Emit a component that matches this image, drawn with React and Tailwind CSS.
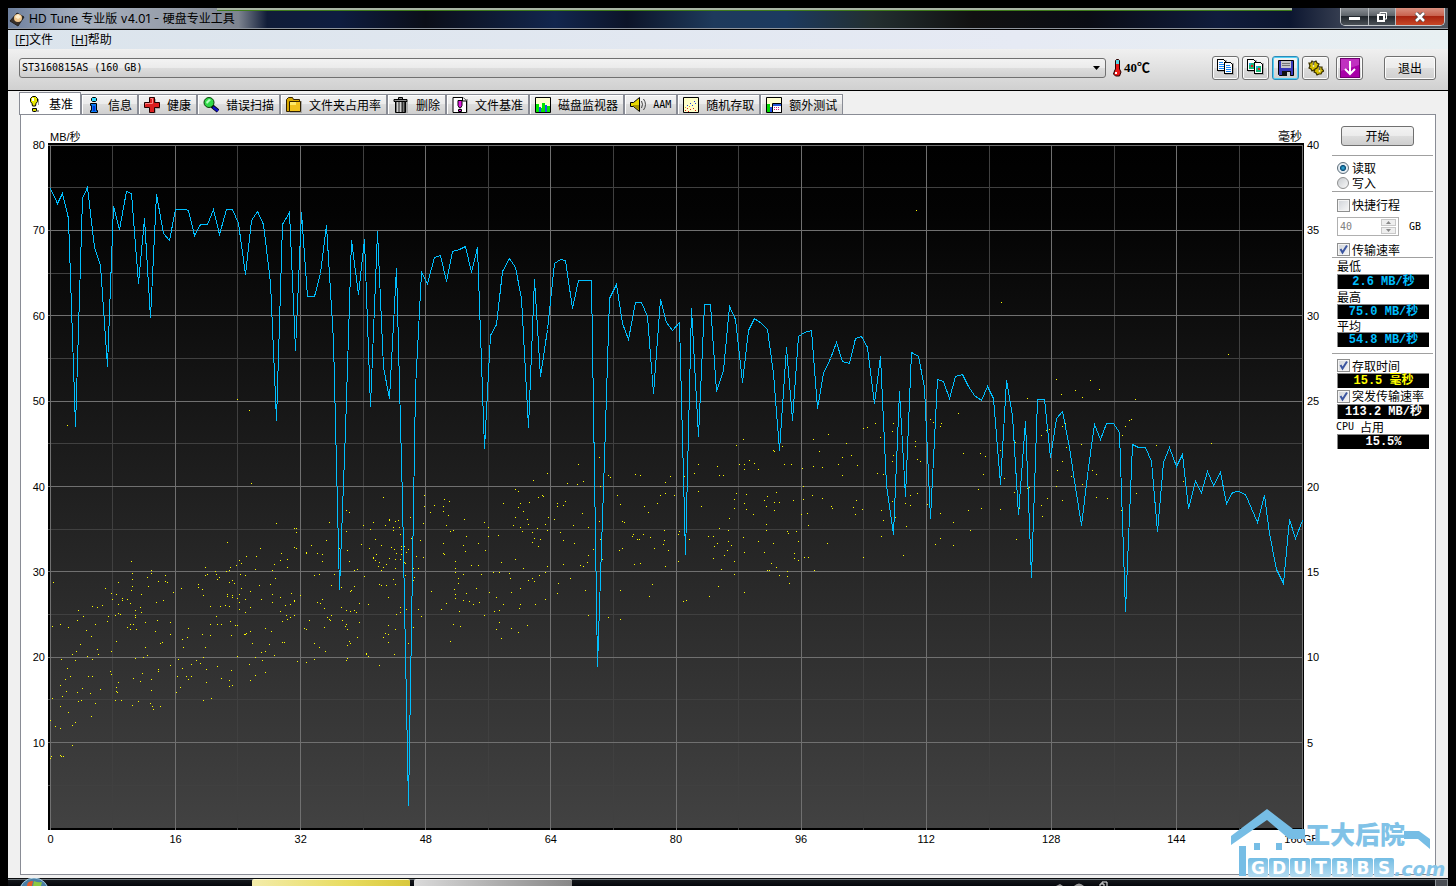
import React from "react";

const transferRate =
  "50,188 57,203 62,193 68,218 75,426 82,198 87,187 94,247 100,265 107,366 113,206 119,229 126,191 131,193 138,283 144,218 150,317 156,194 163,233 169,240 175,209 185,209 188,210 194,235 200,224 207,224 213,209 219,234 226,209 232,209 238,223 245,274 251,220 257,211 263,224 270,282 276,420 282,224 289,212 295,350 301,212 307,296 314,296 320,273 326,225 333,340 339,589 345,430 351,240 358,294 364,239 370,406 377,231 383,367 389,398 396,268 402,500 408,805 415,388 421,272 427,283 434,257 440,255 446,281 452,251 459,249 465,246 471,272 477,247 484,448 490,335 496,324 502,271 509,258 515,267 521,298 528,427 534,279 540,376 547,329 554,263 560,259 565,260 572,308 578,280 591,280 597,666 604,458 609,298 616,284 622,323 628,339 635,302 641,302 647,316 653,393 660,299 666,322 672,330 679,322 685,554 691,308 698,436 704,304 710,304 716,391 723,370 729,306 735,319 742,382 748,330 754,318 761,323 767,329 773,373 779,450 786,347 792,420 798,336 804,332 811,330 817,408 823,373 830,358 836,342 842,361 849,363 855,338 861,336 867,347 874,403 880,356 886,485 893,534 899,391 905,496 911,352 918,356 924,387 930,518 937,379 943,381 949,398 955,376 962,374 968,386 974,395 981,400 987,386 993,398 1000,484 1006,380 1012,415 1018,514 1025,421 1031,577 1037,399 1044,399 1050,457 1056,418 1062,411 1069,447 1075,487 1081,525 1088,467 1094,424 1100,439 1106,423 1113,423 1119,432 1125,611 1132,444 1138,447 1145,447 1151,461 1157,531 1163,462 1169,447 1176,466 1182,454 1188,508 1195,481 1201,492 1207,471 1213,485 1220,472 1226,503 1232,492 1238,491 1245,494 1251,508 1257,522 1264,495 1269,533 1276,569 1283,583 1289,519 1295,538 1302,520";

// Access time samples, in groups, each in thirds of a unit from its origin.
const accessTime = [
  {
    x: 20,
    y: 460,
    points:
      "694,70 769,190 622,247 721,265 679,289 709,289 658,301 664,310 649,316 556,322 706,328 631,322 619,334 628,331 586,334 589,343 562,343 556,346 661,343 676,346 592,358 598,352 637,361 643,370 628,367 535,373 535,382 547,388 550,406 484,385 460,397 442,367 436,364 415,364 436,346 394,331 394,340 382,352 385,379 364,403 334,304 337,340 337,358 337,379 334,391 295,367 256,385 274,400 289,403 277,418 307,415 307,421 322,418 331,430 295,433 247,436 232,442 217,439 175,451 190,469 172,481 121,493 97,499 100,367 145,502 199,511 214,529 226,493 262,484 265,469 286,466 295,460 301,463 346,451 361,442 364,457 346,466 346,472 331,493 340,493 322,502 331,508 349,508 376,487 412,481 406,514 451,487 451,523 409,427 430,421 289,544 274,574 232,568 235,583 202,589 217,598 181,553 169,574 157,583 166,601 124,598 142,625 136,658 121,676 139,694 151,649 127,709 97,715 205,649 217,649 187,685 172,697 211,700 241,688 184,721 175,724 226,730 121,739 145,757 214,769 106,799 121,805 157,796 166,787 91,781 157,856 94,889 91,895 121,886 124,889 130,889 271,634 274,643 295,667 289,682 289,694 292,697 286,721 304,721 337,736 355,724 391,730 397,739 400,748 421,739 394,691 361,664 340,655 367,640 394,658 415,628 415,634 346,595 370,592 382,586 376,562 421,550 427,547 451,616 475,598 472,649 469,697 481,682 505,658 499,649 514,649 514,613 487,625 529,601 541,610 550,592 556,562 490,562 487,538 502,532 505,505 547,523 571,526 571,493 571,439 589,469 592,493 604,493 601,439 616,436 628,439 631,484 646,496 652,496 634,526 622,403 622,409 637,406 637,412 652,415 658,403 664,385 658,427 676,418 658,448 676,457 691,442 691,394 724,418 718,376 751,373 757,403 757,427 757,331 763,313 766,355 781,301 784,280 802,298 802,322 823,205 829,205 829,217 823,262 829,265 781,412 781,454 796,436 811,433 814,400 823,421 823,424 841,406 799,466 802,478 811,472 823,466 787,484 736,505 754,514 691,514 673,523 676,523 679,520 697,550 724,577 736,574 748,553 763,586 787,547 793,547 706,592 727,601 688,613 736,637 706,646 691,661 634,631 628,661 637,676 628,679 604,655 592,619 559,628 559,667 550,721 574,715 652,589 832,604 859,607 883,598 916,574 898,562 883,550 859,508 853,505 868,481 913,502 928,478 931,481 934,466 922,472 913,445 892,427 901,430 907,418 934,376 943,343 898,343 883,346 907,304 907,283 892,280 874,256 859,277 859,280 919,241 928,187 979,151 988,157 979,214 958,265 982,271 988,304 1003,331 1012,328 1033,349 1003,379 994,391 991,394 964,382 964,442 979,451 991,454 1003,451 1009,457 1018,430 1045,433 967,481 979,493 976,499 982,508 1018,487 1012,532 988,544 991,550 982,556 979,601 982,595 1039,580 1039,583 1045,589 1078,616 1123,583 1105,547 1090,532 1096,520 1105,523 1105,496 1126,508 1129,463 1141,442 1141,457 1105,412 1126,373 1120,358 1099,376 1084,376 1078,373 1084,331 1090,322 1075,319 1078,307 1066,301 1060,292 1060,295 1069,283 1084,256 1048,265 1066,238 1024,253 1051,208 1030,196 1060,187 1096,196 1108,178 1108,181 1126,184 1135,181 1120,202 1120,211 1138,202 1141,223 1171,172 1090,112 1174,235 1144,259 1153,259 1144,268 1123,268 1114,262 1129,280 1144,283 1126,298 1141,298 1108,295 1099,313 1126,325 1159,277 1165,268 1156,310 1156,346 1153,307 1180,325 1195,325 1183,352 1180,361 1189,289 1210,292 1201,241 1210,190 1213,139 1213,106 1231,157 1243,136 1234,394 1204,469 1195,448 1159,448 1180,502 1165,550",
  },
  {
    x: 420,
    y: 440,
    points:
      "13,166 13,199 31,217 43,196 70,199 73,178 88,184 70,214 85,226 79,256 91,274 100,271 10,250 1,301 10,352 133,238 193,247 205,262 205,289 139,289 130,316 136,334 175,310 196,331 235,286 250,190 286,148 295,154 340,121 382,100 367,166 370,169 355,172 328,187 301,190 295,202 310,214 286,232 280,256 301,262 307,274 322,238 325,253 352,265 337,277 343,295 337,307 361,298 355,319 376,253 385,232 382,271 403,238 412,190 412,199 430,196 436,184 442,130 472,133 490,124 475,73 487,220 460,256 505,262 421,277 430,301 463,310 520,328 505,346 502,367 490,379 481,376 430,373 451,415 415,430 412,460 496,451 505,526 70,310 70,340 73,343 106,364 106,385 106,397 130,403 115,415 115,430 154,376 175,376 184,403 169,445 139,460 103,448 106,463 106,475 130,481 148,484 160,493 178,487 79,490 64,508 34,454 4,529 118,514 100,553 121,559 91,604 193,526 208,457 229,472 250,493 223,514 238,511 238,547 229,568 244,595 274,565 295,577 322,556 298,505 301,493 346,493 376,478 274,457 301,445 325,421 343,424 337,415 358,406 376,397 382,379 310,385 286,358 268,400 271,415 244,367 220,397 238,397 538,52 541,139 565,106 571,112 592,166 601,193 607,244 613,247 538,244 541,298 547,358 598,331 607,325 640,283 637,289 652,298 658,298 670,283 691,292 703,325 733,271 733,301 730,313 745,331 736,379 643,373 661,370 697,433 688,469 601,451 565,532 601,538 646,103 661,106 673,199 685,217 712,190 721,166 736,160 763,166 736,127 751,109 790,70 802,52 793,109 835,73 823,100 793,214 778,274 775,283 775,364 808,298 835,154 844,199 892,79 898,106 910,106 949,16 958,73 973,73 973,88 988,61 1003,70 1015,88 1060,31 1063,34 1087,19 1093,73 1114,73 1147,85 1180,79 1198,34 1207,82 1255,73 949,160 943,178 943,205 928,235 898,265 925,271 925,304 934,316 922,331 913,346 943,364 943,403 904,388 880,355 883,319 892,310 865,289 880,289 895,439 868,469 973,457 799,481 790,484 979,163 973,190 979,208 1000,223 1033,181 1042,169 1069,157 1063,187 1078,187 1039,199 1063,211 1039,253 1039,271 1060,310 1015,304 970,292 973,337 1033,337 1054,370 1069,382 1042,391 1048,391 1078,406 1102,409 1102,394 1108,430 1120,181 1150,178 1150,139 1177,166 1207,175 1234,199 1237,205 1162,220 1144,223 1165,256 1102,274 1105,280 1129,274 1135,304 1123,340 1123,355 1135,361 1153,352 1165,352 1183,391 1222,310 970,-2 1180,-2 1225,-17",
  },
  {
    x: 840,
    y: 300,
    points:
      "484,8 1165,163 649,238 751,241 778,268 706,271 664,283 727,292 886,298 562,295 355,340 271,358 280,367 304,370 301,379 160,370 106,370 82,382 70,385 157,394 121,412 226,424 226,439 19,430 34,466 7,472 7,526 52,496 112,520 130,523 160,466 157,484 232,478 241,484 370,460 421,460 436,469 430,523 415,568 469,412 481,451 517,349 526,427 493,535 523,577 538,625 562,565 568,562 583,547 604,406 619,391 628,388 676,370 667,379 679,442 724,433 634,454 667,484 652,511 694,529 757,511 769,523 727,553 649,559 622,595 604,616 607,649 667,601 769,592 802,595 844,631 889,580 856,379 868,361 874,358 847,406 949,436 1114,430 1030,544 49,601 40,622 46,643 67,628 124,631 130,661 157,604 166,652 196,610 211,586 211,616 232,580 199,679 124,709 190,766 70,772 262,613 274,595 301,640 340,667 385,631 424,625 481,628 391,691 301,715 286,733 340,736 529,718 229,-270",
  },
  { x: 20, y: 120, points: "142,916 652,838 688,871" },
];

const dotPath = accessTime
  .flatMap((g) =>
    g.points.split(" ").map((p) => {
      const [x, y] = p.split(",").map(Number);
      return `M${Math.round(g.x + (x - 1) / 3)} ${Math.round(g.y + (y - 1) / 3) + 0.5}h1`;
    })
  )
  .join("");

const majorX = [50, 175, 300, 425, 550, 676, 801, 926, 1051, 1176, 1302];
const minorX = [112, 237, 363, 488, 613, 738, 863, 989, 1114, 1239];
const majorY = [145, 230, 315, 401, 486, 571, 657, 742];
const minorY = [187, 273, 358, 443, 529, 614, 699, 785];
const lines = (xs, ys) =>
  xs.map((x) => `M${x + 0.5} 145V830`).join("") + ys.map((y) => `M48 ${y + 0.5}H1303`).join("");

function Plot() {
  return (
    <svg
      className="block h-full w-full"
      viewBox="48 143 1256 687"
      preserveAspectRatio="none"
      shapeRendering="crispEdges"
      role="img"
      aria-label="传输速率"
    >
      <defs>
        <linearGradient id="plotFill" x1="0" y1="0" x2="0" y2="1">
          <stop offset="0" stopColor="#000" />
          <stop offset="0.1" stopColor="#030303" />
          <stop offset="1" stopColor="#424242" />
        </linearGradient>
      </defs>
      <rect x="48" y="143" width="1256" height="687" fill="#000" />
      <rect x="50" y="145" width="1253" height="683" fill="url(#plotFill)" />
      <path d={lines(minorX, minorY)} stroke="#404040" fill="none" />
      <path d={lines(majorX, majorY)} stroke="#707070" fill="none" />
      <path d={dotPath} stroke="#ffff00" fill="none" />
      <polyline points={transferRate} transform="translate(0.5 0.5)" stroke="#00bfff" fill="none" />
    </svg>
  );
}

const Svg = ({ children, size = 16, className = "h-4 w-4" }) => (
  <svg viewBox={`0 0 ${size} ${size}`} className={`${className} shrink-0`} aria-hidden="true">
    {children}
  </svg>
);

const BulbIcon = () => (
  <Svg>
    <path d="M6 14h7v2H6zM12 3h1v6h-1z" fill="#999" />
    <path d="M4.500 2.500l2-2h3l2 2v3l-1.500 2-.5 2.500h-3l-.5-2.500-1.500-2z" fill="#e6e600" stroke="#000" />
    <path d="M6.500 12.500h4v2l-1 1h-2l-1-1z" fill="#d8d800" stroke="#000" />
    <path d="M6 2h2v3H6z" fill="#fff" />
  </Svg>
);
const InfoIcon = () => (
  <svg viewBox="1 0 14 16" className="h-4 w-[14px] shrink-0" aria-hidden="true">
    <path d="M5.500 1.500l1-1h3l1 1v2l-1 1h-3l-1-1z" fill="#3df" stroke="#000" />
    <path d="M4.500 6.500h6v7h1v2h-7v-2h1v-5h-1z" fill="#0878f0" stroke="#000" />
    <path d="M7 9h2v5H7z" fill="#0035d8" />
  </svg>
);
const CrossIcon = () => (
  <Svg>
    <path d="M6 2h6v4h4v6h-4v4H6z" fill="#aaa" />
    <path d="M5.500.5h5v5h5v5h-5v5h-5v-5h-5v-5h5z" fill="#dc2020" stroke="#200" />
    <path d="M6.500 1.500h2v5h-7v1" stroke="#f88" fill="none" />
  </Svg>
);
const SearchIcon = () => (
  <Svg>
    <path d="M9 9l6 5" stroke="#000" strokeWidth="4" />
    <path d="M10 10l5 4" stroke="#1010c8" strokeWidth="2.500" />
    <circle cx="6" cy="5.500" r="5" fill="#30d848" stroke="#064006" />
    <path d="M3 5l3-3 2 1-4 4z" fill="#b8ffc0" />
  </Svg>
);
const FolderIcon = () => (
  <Svg>
    <path d="M2 4h14v12H4z" fill="#aaa" />
    <path d="M.5 14.500v-12l2-2h4l1 2h6v12z" fill="#d8a800" stroke="#302000" />
    <path d="M3.500 4.500h11v10h-11z" fill="#f1c21d" stroke="#302000" />
    <path d="M4 5h6v3H4z" fill="#ffea68" />
  </Svg>
);
const BinIcon = () => (
  <Svg>
    <path d="M4 4h11v12H4z" fill="#aaa" />
    <path d="M5.500 2V.5h4V2M1 2.500h13v2H1z" fill="#909090" stroke="#000" />
    <path d="M2.500 4.500h10v11h-10z" fill="#777" stroke="#000" />
    <path d="M4.500 5v10M7.500 5v10" stroke="#d0d0d0" />
    <path d="M9.500 5v10M11.500 5v10" stroke="#333" />
  </Svg>
);
const FileIcon = () => (
  <Svg>
    <path d="M3 2h13v14H3z" fill="#aaa" />
    <path d="M1 .5h10l3.500 3.500v11.500H1z" fill="#fff" stroke="#000" />
    <path d="M10.500.5V4h4" fill="#fff" stroke="#000" />
    <path d="M6 3.500h4v5L8.500 11h-1L6 8.500z" fill="#e018e0" stroke="#000" />
    <path d="M6.500 12.500h3v2h-3z" fill="#e018e0" stroke="#000" />
  </Svg>
);
const MonitorIcon = () => (
  <Svg>
    <path d="M.5.500h15v15H.5z" fill="#ffffd0" stroke="#000" />
    <path d="M1 7h3v8H1zM7 6h3v9H7zM12 9h3v6h-3z" fill="#00e800" />
    <path d="M4 10h2v5H4zM10 8h2v7h-2z" fill="#2050e8" />
    <path d="M6 11h2v4H6z" fill="#00e800" />
  </Svg>
);
const SpeakerIcon = () => (
  <Svg>
    <path d="M.5 5.500h3l6-5v14l-6-5h-3z" fill="#e8d800" stroke="#000" />
    <path d="M3 8h6v5L4 9H3z" fill="#a89400" />
    <path d="M11.500 4q2 3.500 0 7M13.500 2q4 5.500 0 11" fill="none" stroke="#444" />
  </Svg>
);
const ScatterIcon = () => (
  <Svg>
    <path d="M.5.500h15v15H.5z" fill="#ffffc8" stroke="#000" />
    <path d="M2 13h1v1H2zM4 11h1v1H4zM7 12h1v1H7zM10 11h1v1h-1zM12 13h1v1h-1zM5 14h1v1H5z" fill="#e02020" />
    <path d="M4 8h1v1H4zM7 6h1v1H7zM9 8h1v1H9zM11 4h1v1h-1zM12 6h1v1h-1z" fill="#2040e0" />
    <path d="M2 10h1v1H2zM6 9h1v1H6z" fill="#d8a020" />
  </Svg>
);
const ExtraIcon = () => (
  <Svg>
    <path d="M.5.500h15v15H.5z" fill="#ffffd0" stroke="#000" />
    <path d="M1 7h3v8H1z" fill="#00d800" />
    <path d="M4 10h3v5H4z" fill="#2050e8" />
    <path d="M6.500 6.500h9v9h-9z" fill="#fff" stroke="#000" />
    <path d="M7 7h8v2H7z" fill="#2858d8" />
    <path d="M8 10h1v1H8zM10 10h1v1h-1zM12 10h1v1h-1zM8 12h1v1H8zM10 12h1v1h-1zM12 12h1v1h-1z" fill="#d02080" />
  </Svg>
);

const tabs = [
  ["信息", InfoIcon],
  ["健康", CrossIcon],
  ["错误扫描", SearchIcon],
  ["文件夹占用率", FolderIcon],
  ["删除", BinIcon],
  ["文件基准", FileIcon],
  ["磁盘监视器", MonitorIcon],
  ["AAM", SpeakerIcon],
  ["随机存取", ScatterIcon],
  ["额外测试", ExtraIcon],
];

// A dog-eared sheet of paper with its shadow.
const sheet = (x, y) => (
  <g key={x}>
    <path d={`M${x + 1} ${y + 1}h9v12h-9z`} fill="#aaa" />
    <path d={`M${x + 0.5} ${y + 0.5}h6l2 2v9h-8z`} fill="#fff" stroke="#000" />
  </g>
);
const CopyTextIcon = () => (
  <svg viewBox="0 0 17 17" className="h-[17px] w-[17px] shrink-0" shapeRendering="crispEdges" aria-hidden="true">
    {sheet(0, 0)}
    <path d="M2 3.500h4M2 5.500h5M2 7.500h5M2 9.500h5" stroke="#1888f8" />
    {sheet(7, 3)}
    <path d="M9 6.500h4M9 8.500h5M9 10.500h5M9 12.500h5" stroke="#1888f8" />
  </svg>
);
const CopyImageIcon = () => (
  <svg viewBox="0 0 17 17" className="h-[17px] w-[17px] shrink-0" shapeRendering="crispEdges" aria-hidden="true">
    {sheet(0, 0)}
    <path d="M2 4h5v6H2z" fill="#18b878" />
    <path d="M2 4h2v2H2z" fill="#28a8e8" />
    <path d="M4 6h2v2H4z" fill="#e82020" />
    {sheet(7, 3)}
    <path d="M9 7h5v6H9z" fill="#18b878" />
    <path d="M9 7h2v2H9z" fill="#28a8e8" />
    <path d="M11 9h2v2h-2z" fill="#e82020" />
  </svg>
);
const DiskIcon = () => (
  <Svg>
    <path d="M.5.500h15v15h-14l-1-1z" fill="#3838b8" stroke="#000" />
    <path d="M3 1h10v7H3z" fill="#c8c8c8" />
    <path d="M4 3.500h8M4 5.500h8" stroke="#777" />
    <path d="M4 11h9v5H4z" fill="#111" />
    <path d="M9 12h3v4H9z" fill="#d0d0d0" />
  </Svg>
);
const GearsIcon = () => (
  <Svg>
    <g fill="#d8c000" stroke="#3a3000" strokeWidth="1.200">
      <path d="M1 3l2 0 1-2 2 1 2-1 1 2 2 1-1 2 1 2-2 1-1 2-2-1-2 1-1-2-2-1 1-2z" />
      <path d="M7 9l2-1 1-2 2 1 2 0 0 2 2 2-2 1-1 2-2 0-2 1-1-2-2-1z" />
    </g>
    <path d="M5.500 1v6M11.500 6v6" stroke="#666" strokeWidth="1.500" />
    <circle cx="5.500" cy="6" r="1" fill="#fff8b0" />
    <circle cx="11.500" cy="11" r="1" fill="#fff8b0" />
  </Svg>
);
const DownIcon = () => (
  <Svg size={20} className="h-5 w-5">
    <rect x=".5" y=".5" width="19" height="19" fill="#a800a8" stroke="#700070" />
    <path d="M1 1h18v6L1 13z" fill="#d050d0" opacity=".6" />
    <path d="M10 3v13M5 11l5 5 5-5" stroke="#fff" strokeWidth="2" fill="none" />
  </Svg>
);

const fill = "rounded-[3px] border bg-[linear-gradient(#f3f3f3,#ebebeb_49%,#dddddd_50%,#cfcfcf)]";
const face = `${fill} border-[#707070]`;

function ToolButton({ label, active, children }) {
  return (
    <button
      aria-label={label}
      className={`flex h-6 w-[27px] items-center justify-center ${fill} ${
        active
          ? "border-[#2c8ab8] shadow-[inset_0_0_0_1px_#52d0f5]"
          : "border-[#707070] shadow-[inset_0_0_0_1px_#fcfcfc]"
      }`}
    >
      {children}
    </button>
  );
}

function Check({ label, checked, row }) {
  return (
    <label className={`flex items-center gap-[2px] pl-[5px] ${row}`}>
      <span className="grid h-[13px] w-[13px] shrink-0">
        <input
          type="checkbox"
          defaultChecked={checked}
          className="peer col-start-1 row-start-1 h-[13px] w-[13px] appearance-none border border-[#8e8f8f] bg-[linear-gradient(135deg,#cfd3d8,#f8f8f8)] shadow-[inset_0_0_0_1px_#f4f4f4]"
        />
        <svg
          viewBox="0 0 13 13"
          className="pointer-events-none invisible col-start-1 row-start-1 h-[13px] w-[13px] peer-checked:visible"
          aria-hidden="true"
        >
          <path d="M3.500 6l2 3.500L10 2.500" fill="none" stroke="#3b55a0" strokeWidth="2" />
        </svg>
      </span>
      {label}
    </label>
  );
}

function Radio({ label, checked }) {
  return (
    <label className="flex h-[15px] items-center gap-[3px] pl-[5px]">
      <input
        type="radio"
        name="mode"
        defaultChecked={checked}
        className="h-3 w-3 appearance-none rounded-full border border-[#8e8f8f] bg-[linear-gradient(135deg,#c8ccd0,#f8f8f8)] checked:border-[#5d6c78] checked:bg-[radial-gradient(circle,#35b8e8_0,#0b4a74_38%,#e4ecf2_48%)]"
      />
      {label}
    </label>
  );
}

function Value({ children, color }) {
  return (
    <output
      className={`ml-[5px] flex h-[15px] w-[92px] items-center justify-center border-t border-l border-[#888] bg-black font-['Liberation_Mono','Noto_Sans_CJK_SC',monospace] text-[12px] leading-none font-bold whitespace-pre ${color}`}
    >
      {children}
    </output>
  );
}

const Rule = ({ className = "" }) => <div className={`h-px w-full bg-[#a0a0a0] ${className}`} />;

function Sidebar() {
  return (
    <aside className="mr-[2px] flex w-[101px] shrink-0 flex-col pt-[11px] leading-none">
      <button className={`ml-[9px] h-5 w-[73px] ${face}`}>开始</button>
      <Rule className="mt-[9px] mb-1" />
      <Radio label="读取" checked />
      <Radio label="写入" />
      <Rule className="mt-px" />
      <Check label="快捷行程" row="mt-[5px] h-4" />
      <div className="mt-1 flex h-[19px] items-center justify-between pr-3 pl-[5px] font-['DejaVu_Sans_Mono',monospace] text-[10px]">
        <div className="flex h-[19px] w-[62px] items-center border border-[#b0b0b0] px-[2px]">
          <input
            aria-label="快捷行程 GB"
            type="text"
            inputMode="numeric"
            defaultValue="40"
            disabled
            className="w-full min-w-0 text-[#808080]"
          />
          <div className="flex w-[15px] shrink-0 flex-col gap-px">
            <button disabled aria-label="增加" className="flex h-[7px] items-center justify-center border border-[#c8c8c8] bg-[#eee]">
              <svg viewBox="0 0 5 3" className="h-[3px] w-[5px]"><path d="M0 3L2.500 0 5 3z" fill="#888" /></svg>
            </button>
            <button disabled aria-label="减少" className="flex h-[7px] items-center justify-center border border-[#c8c8c8] bg-[#eee]">
              <svg viewBox="0 0 5 3" className="h-[3px] w-[5px]"><path d="M0 0h5L2.500 3z" fill="#888" /></svg>
            </button>
          </div>
        </div>
        <span>GB</span>
      </div>
      <Check label="传输速率" checked row="mt-[6px] h-[15px]" />
      <Rule />
      <div className="flex h-4 items-center pl-[5px]">最低</div>
      <Value color="text-[#00bfff]">2.6 MB/秒</Value>
      <div className="flex h-[15px] items-center pl-[5px]">最高</div>
      <Value color="text-[#00bfff]">75.0 MB/秒</Value>
      <div className="flex h-[13px] items-center pl-[5px]">平均</div>
      <Value color="text-[#00bfff]">54.8 MB/秒</Value>
      <Rule className="mt-[6px]" />
      <Check label="存取时间" checked row="mt-1 h-[15px]" />
      <Value color="text-[#ffff00]">15.5 毫秒</Value>
      <Check label="突发传输速率" checked row="h-4 whitespace-nowrap" />
      <Value color="text-white">113.2 MB/秒</Value>
      <div className="flex h-[15px] items-center gap-[6px] pl-1">
        <span className="font-['DejaVu_Sans_Mono',monospace] text-[10px]">CPU</span>占用
      </div>
      <Value color="text-white">15.5%</Value>
    </aside>
  );
}

function AxisY({ values, side }) {
  return (
    <div
      className={`flex shrink-0 flex-col py-[2px] ${side === "left" ? "w-[27px] items-end pr-[3px]" : "w-7 items-start pl-[3px]"}`}
    >
      {values.map((v) => (
        <div key={v} className="flex-1">
          <span className="flex h-px items-center">{v}</span>
        </div>
      ))}
    </div>
  );
}

function Chart() {
  const ticks = [0, 16, 32, 48, 64, 80, 96, 112, 128, 144];
  return (
    <section className="flex min-w-0 flex-1 flex-col font-['Liberation_Sans','Noto_Sans_CJK_SC',sans-serif] text-[11px] leading-none">
      <div className="flex h-7 shrink-0 items-end justify-between pr-[30px] pl-[29px]">
        <span>MB/秒</span>
        <span className="text-[12px]">毫秒</span>
      </div>
      <div className="flex min-h-0 flex-1">
        <AxisY side="left" values={[80, 70, 60, 50, 40, 30, 20, 10]} />
        <div className="min-w-0 flex-1">
          <Plot />
        </div>
        <AxisY side="right" values={[40, 35, 30, 25, 20, 15, 10, 5]} />
      </div>
      <div className="flex h-11 shrink-0 pt-1 pr-[30px] pl-[29px]">
        {ticks.map((t) => (
          <div key={t} className="flex-1">
            <span className="flex w-px justify-center">{t}</span>
          </div>
        ))}
        <span className="flex w-px justify-center">160GB</span>
      </div>
    </section>
  );
}

function TitleBar() {
  return (
    <header className="flex h-[22px] shrink-0 items-center border-b border-black bg-[linear-gradient(90deg,#6d7f9d_0,#a9b2c0_5%,#949ba7_12%,#7d8490_16%,#101c38_18%,#0e1c40_23%,#0b0e18_29%,#12264e_38%,#0c1428_43%,#1e3a5c_49%,#1c3a60_54%,#232f30_60%,#111_67%,#0a0c14_75%,#101c3c_84%,#0c1630_89%,#3a4254_93%,#50565e_100%)] shadow-[inset_0_-1px_0_#8e949c]">
      <div className="flex items-center gap-1 pl-[1px]">
        <Svg className="h-4 w-4">
          <path d="M1 10l7-8 7 4-6 9z" fill="#3a3028" stroke="#222" />
          <circle cx="9" cy="7" r="4" fill="#f0c890" />
          <path d="M6 6l3-3 3 3-3 2z" fill="#fff0d0" />
        </Svg>
        <h1 className="font-['Inter','Noto_Sans_CJK_SC',sans-serif] text-[12px] leading-none whitespace-nowrap">
          HD Tune 专业版 v4.01 - 硬盘专业工具
        </h1>
      </div>
      <div className="mr-[156px] ml-[-18px] h-[3px] flex-1 self-start border-b border-[#3f7a1c] bg-[#a9b5a5]" />
      <div className="absolute top-2 right-[11px] flex h-[18px] overflow-hidden rounded-b-[5px] border border-t-0 border-[#c4c8cc]">
        <button aria-label="最小化" className="flex w-7 items-end justify-center border-r border-[#b8bcc0] bg-[linear-gradient(#8d9298,#5a6066_48%,#20262c_50%,#4c5258)] pb-[5px]">
          <span className="h-[3px] w-[11px] bg-white" />
        </button>
        <button aria-label="还原" className="flex w-[27px] items-center justify-center border-r border-[#b8bcc0] bg-[linear-gradient(#8d9298,#5a6066_48%,#20262c_50%,#4c5258)]">
          <svg viewBox="0 0 12 12" className="h-3 w-3" aria-hidden="true">
            <path d="M4 3V1.500h6.500V8H9" fill="none" stroke="#fff" />
            <path d="M2 4h6v6H2z" fill="none" stroke="#fff" strokeWidth="2" />
          </svg>
        </button>
        <button aria-label="关闭" className="flex w-12 items-center justify-center bg-[linear-gradient(#d99080,#c8604c_48%,#a82410_50%,#c84828)]">
          <svg viewBox="0 0 12 10" className="h-[10px] w-3" aria-hidden="true">
            <path d="M2 1l8 8M10 1l-8 8" stroke="#444" strokeWidth="4" />
            <path d="M2 1l8 8M10 1l-8 8" stroke="#fff" strokeWidth="2.500" />
          </svg>
        </button>
      </div>
    </header>
  );
}

function Watermark() {
  return (
    <svg viewBox="0 0 218 70" className="pointer-events-none absolute right-[7px] bottom-[7px] h-[70px] w-[218px]" aria-hidden="true">
      <defs>
        <linearGradient id="letterTile" x1="0" y1="0" x2="0" y2="1">
          <stop offset="0" stopColor="#74bde4" />
          <stop offset="1" stopColor="#b5dcf1" />
        </linearGradient>
      </defs>
      <g fill="#76bde5">
        <path d="M0 27L36 0l26 20h12v10H58L36 11 0 36z" />
        <path d="M173 22h15l11 8v10l-12-10h-14zM8 37h7v30H8zM23 34h6v7h-6zM45 34h6v7h-6z" />
      </g>
      <text x="74" y="35" fontSize="25" fontWeight="900" fill="#80c2e7" fontFamily="'Noto Sans CJK SC', sans-serif">
        工大后院
      </text>
      {"GDUTBBS".split("").map((c, i) => (
        <g key={i}>
          <rect x={17 + i * 21} y="49" width="20" height="19" rx="2" fill="url(#letterTile)" />
          <text x={27 + i * 21} y="65" textAnchor="middle" fontSize="17" fontWeight="700" fill="#fff" fontFamily="'DejaVu Sans', sans-serif">
            {c}
          </text>
        </g>
      ))}
      <text x="163" y="67" fontSize="19" fontWeight="700" fontStyle="italic" fill="#86c5e9" fontFamily="'DejaVu Sans', sans-serif">
        .com
      </text>
    </svg>
  );
}

function Taskbar() {
  return (
    <footer className="mx-2 flex h-2 shrink-0 items-start overflow-hidden bg-[linear-gradient(#0a0c0e_1px,#70787e_1px,#70787e_2px,#15181c_2px,#05070c)]">
      <svg viewBox="0 0 32 8" className="ml-[10px] h-2 w-8" aria-hidden="true">
        <circle cx="16" cy="15" r="15" fill="#4a7fa6" stroke="#a8cce0" />
        <path d="M9 8q0-5 6-5l-1 5z" fill="#e85a28" />
        <path d="M16 3q4 2 8 1l-1 4h-8z" fill="#8cc840" />
      </svg>
      <div className="mt-px ml-[202px] h-[7px] w-[158px] rounded-t-[2px] border-t border-[#fffbd0] bg-[linear-gradient(90deg,#f3ecaa,#e8dc60_60%,#d9c83c)]" />
      <div className="mt-px ml-1 h-[7px] w-[158px] rounded-t-[2px] border-t border-[#eee] bg-[linear-gradient(90deg,#dadada,#a8a8a8_60%,#888)]" />
      <svg viewBox="0 0 56 8" className="ml-[480px] h-2 w-14" aria-hidden="true">
        <path d="M4 8l4-2 3 2zM22 8q5-5 10 0z" fill="#999" />
        <path d="M48 8V6h4v2M50 6V4h5v4" stroke="#eee" fill="none" />
      </svg>
      <div className="mt-px ml-auto h-[7px] w-[13px] border border-b-0 border-[#8a9094] bg-[#4a4e54]" />
    </footer>
  );
}

export default function App() {
  return (
    <div className="relative flex h-screen flex-col overflow-hidden bg-black pt-2 font-['Noto_Sans_CJK_SC',sans-serif] text-[12px] text-black">
      <div className="mx-2 flex min-h-0 flex-1 flex-col bg-[#f0f0f0]">
        <TitleBar />
        <nav className="flex h-[19px] shrink-0 items-center gap-[18px] bg-[linear-gradient(90deg,#dbe4ec,#e6eaf4_70%,#e8f0f2)] pl-[7px] font-['Open_Sans','Noto_Sans_CJK_SC',sans-serif] text-[12px] leading-none">
          <button>[<u>F</u>]文件</button>
          <button>[<u>H</u>]帮助</button>
        </nav>
        <div className="flex h-[42px] shrink-0 items-center border-b border-black bg-[linear-gradient(#f0f0f0,#d0d0d0)] pr-3 pb-1 pl-[11px]">
          <div className="grid h-5 min-w-0 flex-1 items-center">
            <select
              aria-label="硬盘"
              className={`col-start-1 row-start-1 h-5 w-full appearance-none pl-[2px] font-['DejaVu_Sans_Mono',monospace] text-[10px] ${face}`}
            >
              <option>ST3160815AS (160 GB)</option>
            </select>
            <svg viewBox="0 0 7 4" className="pointer-events-none col-start-1 row-start-1 mr-[6px] h-1 w-[7px] justify-self-end" aria-hidden="true">
              <path d="M0 0h7L3.500 4z" fill="#000" />
            </svg>
          </div>
          <svg viewBox="0 0 10 18" className="ml-[6px] h-[18px] w-[10px]" aria-hidden="true">
            <path d="M3.500 1.500l1-1h2l1 1V10l1.500 3-1.500 4h-4l-2-2 1-3 1-2z" fill="#e81818" stroke="#200" />
            <path d="M4 1h3v4H4z" fill="#58d8e8" />
            <path d="M3 13h2v2H3z" fill="#fff" />
          </svg>
          <span className="mr-auto flex w-[90px] items-center pl-[2px] font-['Liberation_Serif','Noto_Sans_CJK_SC',serif] text-[13px] leading-none font-bold">
            40℃
          </span>
          <div className="flex gap-[3px]">
            <ToolButton label="复制文本"><CopyTextIcon /></ToolButton>
            <ToolButton label="复制图像"><CopyImageIcon /></ToolButton>
            <ToolButton label="保存" active><DiskIcon /></ToolButton>
            <ToolButton label="设置"><GearsIcon /></ToolButton>
          </div>
          <div className="ml-[7px]">
            <ToolButton label="最小化到托盘"><DownIcon /></ToolButton>
          </div>
          <button className={`ml-[21px] h-6 w-[52px] leading-none shadow-[inset_0_0_0_1px_#fcfcfc] ${face}`}>退出</button>
        </div>
        <main className="flex min-h-0 flex-1 flex-col pr-3 pb-[3px] pl-3">
          <div role="tablist" className="-ml-px flex h-[23px] shrink-0 items-end leading-none">
            <button
              role="tab"
              aria-selected="true"
              className="-mb-px flex h-[23px] items-center gap-[7px] border border-b-0 border-[#898c95] bg-white pr-[7px] pl-[6px]"
            >
              <BulbIcon />基准
            </button>
            {tabs.map(([label, Icon]) => (
              <button
                key={label}
                role="tab"
                aria-selected="false"
                className="flex h-5 items-center gap-[7px] border border-b-0 border-[#898c95] bg-[linear-gradient(#f2f2f2,#ebebeb_49%,#dddddd_50%,#cfcfcf)] pr-[5px] pl-[5px] shadow-[inset_1px_1px_0_#fff]"
              >
                <Icon />
                {label === "AAM" ? (
                  <span className="font-['DejaVu_Sans_Mono',monospace] text-[10px]">AAM</span>
                ) : (
                  label
                )}
              </button>
            ))}
          </div>
          <div className="flex min-h-0 flex-1 border border-[#898c95] bg-white">
            <Chart />
            <Sidebar />
          </div>
        </main>
      </div>
      <Taskbar />
      <Watermark />
    </div>
  );
}
